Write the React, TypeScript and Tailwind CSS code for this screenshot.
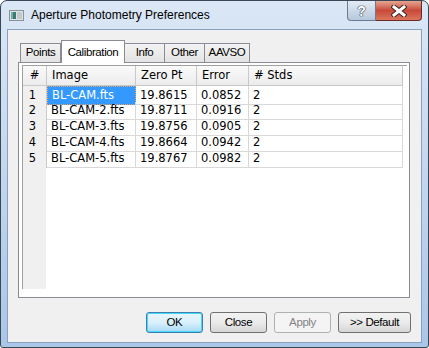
import React from "react";

const rows = [
  ["1", "BL-CAM.fts", "19.8615", "0.0852", "2"],
  ["2", "BL-CAM-2.fts", "19.8711", "0.0916", "2"],
  ["3", "BL-CAM-3.fts", "19.8756", "0.0905", "2"],
  ["4", "BL-CAM-4.fts", "19.8664", "0.0942", "2"],
  ["5", "BL-CAM-5.fts", "19.8767", "0.0982", "2"],
];

const tabs = [
  { label: "Points", w: "w-[41px]" },
  { label: "Calibration", w: "w-[64px]", active: true },
  { label: "Info", w: "w-[41px]" },
  { label: "Other", w: "w-[41px]" },
  { label: "AAVSO", w: "w-[46px]" },
];

const uiFont = { fontFamily: '"Liberation Sans", Arial, sans-serif' };
const gridFont = { fontFamily: '"DejaVu Sans", Verdana, sans-serif' };

function TitleIcon() {
  return (
    <svg width="15" height="11" viewBox="0 0 15 11">
      <rect x="0.5" y="0.5" width="14" height="10" fill="#dfe3e6" stroke="#8a9097" />
      <rect x="2" y="2" width="5" height="7" fill="#3d7a73" />
      <rect x="2" y="2" width="2" height="7" fill="#6fb0a2" />
      <rect x="8" y="2" width="5" height="7" fill="#c4c9cd" />
    </svg>
  );
}

function CaptionButtons() {
  return (
    <div className="flex">
      <div className="flex h-[20px] w-[29px] items-center justify-center rounded-bl-[4px] border border-t-0 border-[#6b7a8c] bg-linear-to-b from-[#e3ebf4] to-[#b6c8dd]">
        <span
          className="text-[14px] font-bold leading-none text-white"
          style={{ ...uiFont, textShadow: "0 0 1px #2a3440, 0 0 1px #2a3440, 0 0 1px #2a3440" }}
        >
          ?
        </span>
      </div>
      <div className="flex h-[20px] w-[46px] items-center justify-center rounded-br-[4px] border border-l-0 border-t-0 border-[#6e2a22] bg-linear-to-b from-[#e3a592] via-[#c9483a] to-[#d8765b]">
        <svg width="16" height="12" viewBox="0 0 16 12">
          <path d="M3 2 L13 10 M13 2 L3 10" stroke="#3a2624" strokeWidth="5" strokeLinecap="square" />
          <path d="M3 2 L13 10 M13 2 L3 10" stroke="#ffffff" strokeWidth="3" strokeLinecap="square" />
        </svg>
      </div>
    </div>
  );
}

function Btn({ label, w, variant }: { label: string; w: string; variant?: "default" | "disabled" }) {
  let cls = "border-[#707070] bg-linear-to-b from-[#f2f2f2] via-[#ebebeb] to-[#d6d6d6] text-black";
  if (variant === "default")
    cls = "border-[#3c7fb1] bg-linear-to-b from-[#eaf6fd] via-[#d9f0fc] to-[#a7d9f5] text-black shadow-[inset_0_0_0_1px_#48d8fb]";
  if (variant === "disabled") cls = "border-[#adb2b5] bg-[#f4f4f4] text-[#838383]";
  return (
    <div
      className={`flex h-[21px] ${w} items-center justify-center rounded-[3px] border text-[11.5px] tracking-[-0.4px] ${cls}`}
      style={uiFont}
    >
      {label}
    </div>
  );
}

export default function App() {
  return (
    <div className="h-[348px] w-[429px] bg-white">
      <div className="flex h-[348px] w-[429px] flex-col rounded-t-[7px] rounded-b-[3px] border border-[#3a4754] bg-linear-to-b from-[#dbe7f5] to-[#aac6e8]">
        {/* title bar */}
        <div className="flex h-[28px] items-start justify-between pl-[8px] pr-[6px]">
          <div className="mt-[8px] flex items-center gap-[7px]">
            <TitleIcon />
            <span className="text-[12px] leading-none text-black" style={uiFont}>
              Aperture Photometry Preferences
            </span>
          </div>
          <CaptionButtons />
        </div>

        {/* client */}
        <div className="mx-[6px] mb-[4px] flex flex-1 flex-col border border-[#8aa1bd] bg-[#f0f0f0] px-[10px] pt-[10px]">
          {/* tabs */}
          <div className="flex h-[22px] items-end pl-[2px] text-[11.5px] tracking-[-0.4px]" style={uiFont}>
            {tabs.map((t) =>
              t.active ? (
                <div
                  key={t.label}
                  className={`relative z-10 -mb-px flex h-[23px] ${t.w} items-start justify-center border border-b-0 border-[#898c95] bg-white pt-[3px] text-black`}
                >
                  {t.label}
                </div>
              ) : (
                <div
                  key={t.label}
                  className={`-ml-px flex h-[19px] ${t.w} items-center justify-center border border-b-0 border-[#898c95] bg-linear-to-b from-[#f3f3f3] to-[#e3e3e3] text-black first:ml-0`}
                >
                  {t.label}
                </div>
              )
            )}
          </div>

          {/* pane */}
          <div className="h-[236px] w-[392px] border border-[#898c95] bg-white pl-[3px] pt-[2px]">
            <div className="flex h-[224px] w-[385px] flex-col border-l border-t border-[#a0a0a0] text-[11.5px] text-black" style={gridFont}>
              <div className="grid h-[20px] grid-cols-[24px_89px_61px_52px_154px]">
                {["#", "Image", "Zero Pt", "Error", "# Stds"].map((h, i) => (
                  <div
                    key={h}
                    className={`flex items-center border-b border-r border-[#c9c9c9] bg-linear-to-b from-[#fafafa] to-[#ececec] ${
                      i === 0 ? "justify-center" : "pl-[5px]"
                    }`}
                  >
                    {h}
                  </div>
                ))}
              </div>
              {rows.map((r) => (
                <div key={r[0]} className="grid h-[16px] grid-cols-[24px_89px_61px_52px_154px]">
                  <div className="flex items-center justify-center border-b border-r border-[#c9c9c9] bg-[#f0f0f0] pr-[4px]">
                    {r[0]}
                  </div>
                  {r.slice(1).map((c, j) =>
                    r[0] === "1" && j === 0 ? (
                      <div
                        key={j}
                        className="flex items-center border border-dotted border-[#e2a26a] bg-[#3399ff] pl-[4px] text-white"
                      >
                        {c}
                      </div>
                    ) : (
                      <div key={j} className="flex items-center border-b border-r border-[#d8d8d8] pl-[4px]">
                        {c}
                      </div>
                    )
                  )}
                </div>
              ))}
              <div className="flex-1">
                <div className="h-full w-[23px] bg-[#f0f0f0]" />
              </div>
            </div>
          </div>

          {/* buttons */}
          <div className="mt-[14px] flex justify-end gap-[7px]">
            <Btn label="OK" w="w-[57px]" variant="default" />
            <Btn label="Close" w="w-[57px]" />
            <Btn label="Apply" w="w-[57px]" variant="disabled" />
            <Btn label=">> Default" w="w-[73px]" />
          </div>
        </div>
      </div>
    </div>
  );
}
